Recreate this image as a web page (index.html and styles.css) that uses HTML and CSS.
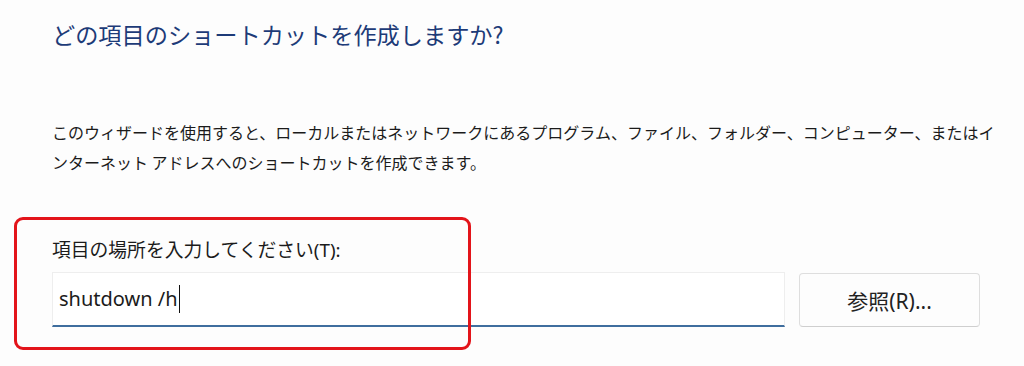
FILE: index.html
```html
<!DOCTYPE html>
<html>
<head>
	<meta charset="utf-8">
	<title>ショートカットの作成</title>
	<link rel="stylesheet" href="styles.css">
</head>
<body>
<div class="page">
	<h1 class="title">どの項目のショートカットを作成しますか?</h1>
	<p class="desc">このウィザードを使用すると、ローカルまたはネットワークにあるプログラム、ファイル、フォルダー、コンピューター、またはインターネット アドレスへのショートカットを作成できます。</p>

	<div class="field">
		<div class="field-label">項目の場所を入力してください(T):</div>
		<div class="row">
			<div class="location">shutdown /h<span class="caret"></span></div>
			<button class="browse">参照(R)...</button>
		</div>
		<!-- red annotation box drawn over the field -->
		<div class="mark"></div>
	</div>
</div>
</body>
</html>
```

FILE: styles.css
```css
body {
	margin: 0;
	background: #fdfdfd;
	font-family: "Noto Sans", "Noto Sans CJK JP", sans-serif;
	color: #1b1b1b;
}
.page {
	box-sizing: border-box;
	min-height: 366px;
	padding: 18px 0 0 52px;
}
.title {
	margin: 0;
	font-family: "Noto Sans CJK JP", sans-serif;
	font-size: 23.2px;
	line-height: 32px;
	font-weight: normal;
	color: #1d3b78;
}
.desc {
	margin: 67px 0 0 0;
	width: 952px;
	font-family: "Noto Sans CJK JP", sans-serif;
	font-size: 16px;
	line-height: 30px;
}
.field {
	position: relative;
	margin-top: 60px;
}
.field-label {
	font-family: "Noto Sans", "Noto Sans CJK JP", sans-serif;
	font-size: 18.8px;
	line-height: 26px;
}
.row {
	display: flex;
	gap: 14px;
	margin-top: 9px;
	align-items: flex-start;
}
.location {
	box-sizing: border-box;
	width: 733px;
	height: 55px;
	padding: 0 6px;
	background: #fff;
	border: 1px solid #eeeeee;
	border-bottom: 2px solid #3f6e9e;
	font-size: 20px;
	line-height: 50px;
	color: #1b1b1b;
	display: flex;
	align-items: center;
}
.caret {
	display: inline-block;
	width: 1px;
	height: 28px;
	margin-left: 1px;
	background: #111;
}
.browse {
	box-sizing: border-box;
	width: 181px;
	height: 54px;
	margin-top: 1px;
	background: #fdfdfd;
	border: 1px solid #dedede;
	border-bottom-color: #cfcfcf;
	border-radius: 4px;
	font-family: "Noto Sans", "Noto Sans CJK JP", sans-serif;
	font-size: 21px;
	color: #222;
}
.mark {
	position: absolute;
	left: -38px;
	top: -20px;
	width: 457px;
	height: 133px;
	box-sizing: border-box;
	border: 3px solid #e3141a;
	border-radius: 9px;
}
```
